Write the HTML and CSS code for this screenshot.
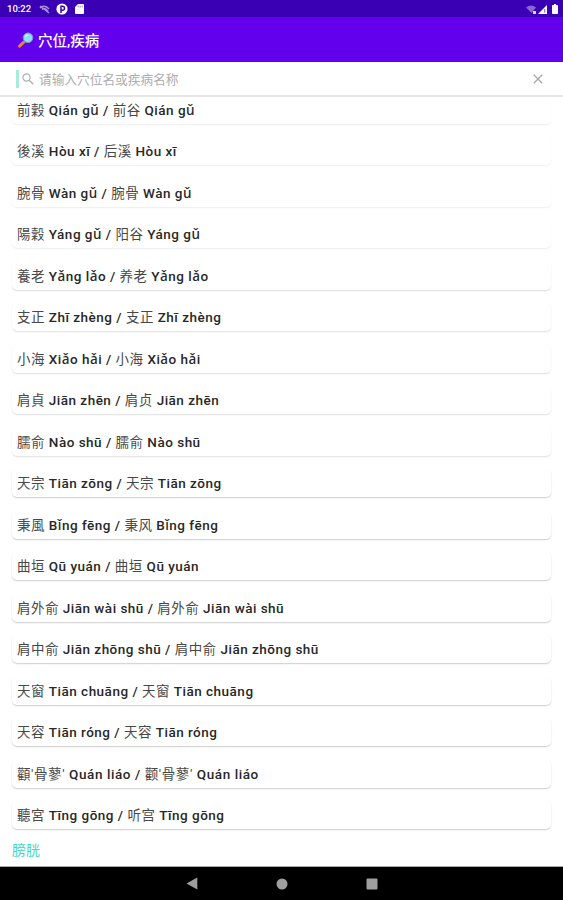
FILE: index.html
```
<!DOCTYPE html>
<html lang="zh-CN">
<head>
  <meta charset="UTF-8" />
  <meta name="viewport" content="width=device-width, initial-scale=1.0"/>
  <title>穴位,疾病</title>
  <link rel="stylesheet" href="styles.css">
</head>
<body>
  <div class="screen">
    <div class="status-bar">
      <span class="clock">10:22</span>
      <svg class="icon-cast" width="11" height="9" viewBox="0 0 11 9">
        <path d="M1 3C3 .5 7 .5 10 4M3 4.5C5 2.5 7 3.5 9 6.5M1 1l9 7" fill="none" stroke="#a58ee0" stroke-width="1.4"/>
      </svg>
      <svg class="icon-app" width="12" height="12" viewBox="0 0 12 12">
        <circle cx="6" cy="6" r="5.6" fill="#fff"/>
        <path d="M5 10V3.2h1.5a2 2 0 0 1 0 4H5" fill="none" stroke="#3a00b3" stroke-width="1.5"/>
      </svg>
      <svg class="icon-card" width="9" height="10" viewBox="0 0 9 10">
        <path d="M3 0h5a1 1 0 0 1 1 1v8a1 1 0 0 1-1 1H1a1 1 0 0 1-1-1V3z" fill="#fff"/>
        <path d="M3.2 1.5v2M5.2 1.5v2M7.2 1.5v2" stroke="#8f70d8" stroke-width=".8"/>
      </svg>
      <div class="status-right">
        <svg width="10" height="9" viewBox="0 0 10 9">
          <path d="M0 2.5Q5-1.5 10 2.5L5.5 8z" fill="#8767d2"/>
          <path d="M7 6h3v3H7z" fill="#ded5f5"/>
        </svg>
        <svg width="9" height="9" viewBox="0 0 9 9">
          <path d="M9 0v9H0z" fill="#fff"/>
          <path d="M6.8 4v3.5" stroke="#6a45c7" stroke-width="1"/>
        </svg>
        <svg class="icon-battery" width="6" height="10" viewBox="0 0 6 10">
          <path d="M2 0h2v1h1.2a.8.8 0 0 1 .8.8v7.4a.8.8 0 0 1-.8.8H.8a.8.8 0 0 1-.8-.8V1.8A.8.8 0 0 1 .8 1H2z" fill="#fff"/>
        </svg>
      </div>
    </div>

    <div class="app-bar">
      <svg width="17" height="17" viewBox="0 0 17 17">
        <path d="M7 10L2.6 14.2" stroke="#f0812f" stroke-width="3" stroke-linecap="round"/>
        <path d="M8.2 8.8L6.8 10.2" stroke="#8b8f98" stroke-width="2"/>
        <circle cx="11" cy="5.8" r="4.8" fill="#8edcf8" stroke="#78a0bc" stroke-width="1"/>
        <path d="M8.2 5.2A3.2 3.2 0 0 1 11 2.8" fill="none" stroke="#d6f5ff" stroke-width="1.2"/>
      </svg>
      <h1>穴位,疾病</h1>
    </div>

    <div class="search-bar">
      <span class="cursor"></span>
      <svg class="icon-search" width="12" height="12" viewBox="0 0 12 12">
        <circle cx="4.5" cy="4.5" r="3.6" fill="none" stroke="#b0b0b0" stroke-width="1.2"/>
        <path d="M7.2 7.2L11.3 11.3" stroke="#b0b0b0" stroke-width="1.4"/>
      </svg>
      <span class="placeholder">请输入穴位名或疾病名称</span>
      <svg class="icon-clear" width="10" height="10" viewBox="0 0 10 10">
        <path d="M.8.8l8.4 8.4M9.2.8L.8 9.2" stroke="#a8a8a8" stroke-width="1.3"/>
      </svg>
    </div>

    <div class="list">
      <div class="item">前穀 <b>Qián gǔ /</b> 前谷 <b>Qián gǔ</b></div>
      <div class="item">後溪 <b>Hòu xī /</b> 后溪 <b>Hòu xī</b></div>
      <div class="item">腕骨 <b>Wàn gǔ /</b> 腕骨 <b>Wàn gǔ</b></div>
      <div class="item">陽穀 <b>Yáng gǔ /</b> 阳谷 <b>Yáng gǔ</b></div>
      <div class="item">養老 <b>Yǎng lǎo /</b> 养老 <b>Yǎng lǎo</b></div>
      <div class="item">支正 <b>Zhī zhèng /</b> 支正 <b>Zhī zhèng</b></div>
      <div class="item">小海 <b>Xiǎo hǎi /</b> 小海 <b>Xiǎo hǎi</b></div>
      <div class="item">肩貞 <b>Jiān zhēn /</b> 肩贞 <b>Jiān zhēn</b></div>
      <div class="item">臑俞 <b>Nào shū /</b> 臑俞 <b>Nào shū</b></div>
      <div class="item">天宗 <b>Tiān zōng /</b> 天宗 <b>Tiān zōng</b></div>
      <div class="item">秉風 <b>Bǐng fēng /</b> 秉风 <b>Bǐng fēng</b></div>
      <div class="item">曲垣 <b>Qū yuán /</b> 曲垣 <b>Qū yuán</b></div>
      <div class="item">肩外俞 <b>Jiān wài shū /</b> 肩外俞 <b>Jiān wài shū</b></div>
      <div class="item">肩中俞 <b>Jiān zhōng shū /</b> 肩中俞 <b>Jiān zhōng shū</b></div>
      <div class="item">天窗 <b>Tiān chuāng /</b> 天窗 <b>Tiān chuāng</b></div>
      <div class="item">天容 <b>Tiān róng /</b> 天容 <b>Tiān róng</b></div>
      <div class="item quoted">顴'骨蓼' <b>Quán liáo /</b> 颧'骨蓼' <b>Quán liáo</b></div>
      <div class="item">聽宮 <b>Tīng gōng /</b> 听宫 <b>Tīng gōng</b></div>
      <div class="group-title">膀胱</div>
    </div>

    <div class="nav-bar">
      <svg width="12" height="13" viewBox="0 0 12 13"><path d="M11.3.5v12L.5 6.5z" fill="#9e9e9e"/></svg>
      <svg width="12" height="12" viewBox="0 0 12 12"><circle cx="6" cy="6" r="5.5" fill="#9e9e9e"/></svg>
      <svg width="12" height="12" viewBox="0 0 12 12"><rect x=".5" y=".5" width="11" height="11" rx="1" fill="#9e9e9e"/></svg>
    </div>
  </div>
</body>
</html>
```
FILE: styles.css
```
* {
  box-sizing: border-box;
}

body {
  margin: 0;
  font-family: Roboto, "Noto Sans CJK SC", sans-serif;
  background: #fff;
}

svg {
  display: block;
  flex-shrink: 0;
}

.screen {
  display: flex;
  flex-direction: column;
  height: 900px;
  overflow: hidden;
}

.status-bar {
  display: flex;
  align-items: center;
  height: 17px;
  padding: 1px 5px 0 7px;
  background: #3a00b3;
  color: #fff;
}

.clock {
  width: 24px;
  font-size: 9.5px;
  font-weight: 500;
  line-height: 16px;
}

.icon-cast {
  margin-left: 8px;
}

.icon-app {
  margin-left: 6px;
}

.icon-card {
  margin-left: 7px;
}

.status-right {
  display: flex;
  align-items: center;
  gap: 2px;
  margin-left: auto;
}

.icon-battery {
  margin-left: 3px;
}

.app-bar {
  display: flex;
  align-items: center;
  gap: 4px;
  height: 45px;
  padding: 2px 0 0 17px;
  background: #6200ee;
  color: #fff;
}

h1 {
  margin: 0;
  padding-top: 2px;
  font-size: 14.5px;
  font-weight: 500;
  line-height: 20px;
}

.search-bar {
  display: flex;
  align-items: center;
  height: 35px;
  padding: 1px 20px 0 16px;
  border-bottom: 2px solid #e6e6e6;
}

.cursor {
  width: 3px;
  height: 18px;
  background: #a7ecdc;
}

.icon-search {
  margin-left: 3px;
}

.placeholder {
  margin-left: 5px;
  padding-top: 1px;
  font-size: 12.7px;
  line-height: 18px;
  color: #adadad;
}

.icon-clear {
  margin-left: auto;
}

.list {
  flex: 1;
  min-height: 0;
  padding: 0 12px;
  overflow: hidden;
}

.item {
  height: 28px;
  margin-bottom: 13.47px;
  padding-left: 5px;
  border-radius: 5px;
  box-shadow: 0 1px 1.5px rgba(0, 0, 0, 0.2);
  font-size: 13.5px;
  letter-spacing: 0.49px;
  line-height: 28px;
  color: #484848;
  white-space: nowrap;
}

.item b {
  font-family: Roboto, "Noto Sans", sans-serif;
  font-weight: 500;
  color: #282828;
}

.item:first-child {
  margin-top: -1px;
}

.quoted {
  letter-spacing: 0.58px;
}

/* shadows get stronger further down the screen */
.item:nth-child(-n+9) {
  box-shadow: 0 1px 1.5px rgba(0, 0, 0, 0.13);
}

.item:nth-child(-n+4) {
  box-shadow: 0 1px 1.5px rgba(0, 0, 0, 0.07);
}

.group-title {
  margin-top: -2px;
  font-size: 14px;
  line-height: 20px;
  color: #3fd9c0;
}

.nav-bar {
  display: flex;
  align-items: center;
  justify-content: center;
  gap: 78px;
  height: 34px;
  border-top: 1px solid #aaa;
  background: #000;
}
```
